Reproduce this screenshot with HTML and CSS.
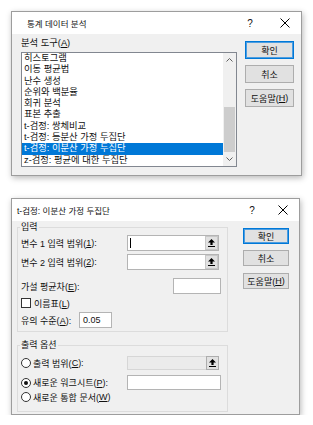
FILE: index.html
```html
<!DOCTYPE html>
<html lang="ko">
<head>
    <meta charset="UTF-8">
    <meta name="viewport" content="width=device-width, initial-scale=1.0">
    <title>통계 데이터 분석</title>
    <link rel="stylesheet" href="styles.css">
</head>
<body>
    <div class="page">
        <div class="dialog analysis">
            <div class="titlebar">
                <span class="title">통계 데이터 분석</span>
                <span class="help">?</span>
                <span class="close">
                    <svg width="10" height="10" viewBox="0 0 10 10"><path d="M0.5 0.5 L9.5 9.5 M9.5 0.5 L0.5 9.5" stroke="#000" stroke-width="1"/></svg>
                </span>
            </div>
            <div class="body">
                <div class="tools">
                    <div class="field-label">분석 도구(<u>A</u>)</div>
                    <div class="listbox">
                        <div class="items">
                            <div class="item">히스토그램</div>
                            <div class="item">이동 평균법</div>
                            <div class="item">난수 생성</div>
                            <div class="item">순위와 백분율</div>
                            <div class="item">회귀 분석</div>
                            <div class="item">표본 추출</div>
                            <div class="item">t-검정: 쌍체비교</div>
                            <div class="item">t-검정: 등분산 가정 두집단</div>
                            <div class="item selected">t-검정: 이분산 가정 두집단</div>
                            <div class="item">z-검정: 평균에 대한 두집단</div>
                        </div>
                        <div class="scrollbar">
                            <div class="arrow">
                                <svg width="7" height="4" viewBox="0 0 7 4"><path d="M0.5 3.5 L3.5 0.5 L6.5 3.5" fill="none" stroke="#606060"/></svg>
                            </div>
                            <div class="track"><div class="thumb"></div></div>
                            <div class="arrow">
                                <svg width="7" height="4" viewBox="0 0 7 4"><path d="M0.5 0.5 L3.5 3.5 L6.5 0.5" fill="none" stroke="#606060"/></svg>
                            </div>
                        </div>
                    </div>
                </div>
                <div class="buttons">
                    <div class="btn default">확인</div>
                    <div class="btn">취소</div>
                    <div class="btn">도움말(<u>H</u>)</div>
                </div>
            </div>
        </div>

        <div class="dialog ttest">
            <div class="titlebar">
                <span class="title">t-검정: 이분산 가정 두집단</span>
                <span class="help">?</span>
                <span class="close">
                    <svg width="10" height="10" viewBox="0 0 10 10"><path d="M0.5 0.5 L9.5 9.5 M9.5 0.5 L0.5 9.5" stroke="#000" stroke-width="1"/></svg>
                </span>
            </div>
            <div class="body">
                <div class="groups">
                    <fieldset class="group input-group">
                        <legend>입력</legend>
                        <div class="row range-row">
                            <span class="name">변수 1 입력 범위(<u>1</u>):</span>
                            <div class="refedit">
                                <span class="caret"></span>
                                <span class="refbtn">
                                    <svg width="7" height="8" viewBox="0 0 7 8"><path d="M3.5 0 L7 3.5 H4.6 V6 H2.4 V3.5 H0 Z" fill="#000"/><rect x="0" y="7" width="7" height="1" fill="#000"/></svg>
                                </span>
                            </div>
                        </div>
                        <div class="row range-row second">
                            <span class="name">변수 2 입력 범위(<u>2</u>):</span>
                            <div class="refedit">
                                <span class="refbtn">
                                    <svg width="7" height="8" viewBox="0 0 7 8"><path d="M3.5 0 L7 3.5 H4.6 V6 H2.4 V3.5 H0 Z" fill="#000"/><rect x="0" y="7" width="7" height="1" fill="#000"/></svg>
                                </span>
                            </div>
                        </div>
                        <div class="row mean-row">
                            <span>가설 평균차(<u>E</u>):</span>
                            <div class="textbox mean"></div>
                        </div>
                        <div class="row check-row">
                            <span class="checkbox"></span>
                            <span>이름표(<u>L</u>)</span>
                        </div>
                        <div class="row alpha-row">
                            <span class="alpha-name">유의 수준(<u>A</u>):</span>
                            <div class="textbox alpha">0.05</div>
                        </div>
                    </fieldset>

                    <fieldset class="group output-group">
                        <legend>출력 옵션</legend>
                        <div class="row out-range">
                            <span class="name"><span class="radio"></span>출력 범위(<u>C</u>):</span>
                            <div class="refedit disabled">
                                <span class="refbtn">
                                    <svg width="7" height="8" viewBox="0 0 7 8"><path d="M3.5 0 L7 3.5 H4.6 V6 H2.4 V3.5 H0 Z" fill="#000"/><rect x="0" y="7" width="7" height="1" fill="#000"/></svg>
                                </span>
                            </div>
                        </div>
                        <div class="row out-sheet">
                            <span class="name"><span class="radio checked"></span>새로운 워크시트(<u>P</u>):</span>
                            <div class="textbox sheet"></div>
                        </div>
                        <div class="row out-book">
                            <span class="name"><span class="radio"></span>새로운 통합 문서(<u>W</u>)</span>
                        </div>
                    </fieldset>
                </div>
                <div class="buttons">
                    <div class="btn default">확인</div>
                    <div class="btn">취소</div>
                    <div class="btn help-btn">도움말(<u>H</u>)</div>
                </div>
            </div>
        </div>
    </div>
</body>
</html>
```

FILE: styles.css
```css
* {
    box-sizing: border-box;
}
body {
    margin: 0;
    background-color: #fff;
    font-family: "Liberation Sans", "Noto Sans CJK KR", sans-serif;
    font-size: 9px;
    color: #111;
}
.page {
    padding: 11px 0 0 11px;
}
.dialog {
    display: flex;
    flex-direction: column;
    background-color: #f0f0f0;
    border: 1px solid #9d9d9d;
    box-shadow: 1px 2px 6px rgba(0, 0, 0, 0.28);
}
.analysis {
    width: 291px;
    height: 165px;
}
.ttest {
    width: 289px;
    height: 217px;
    margin-top: 22px;
}
.titlebar {
    flex: none;
    display: flex;
    align-items: center;
    height: 22px;
    background-color: #fff;
}
.title {
    flex: 1;
    font-size: 8.5px;
    white-space: nowrap;
}
.analysis .title {
    padding-left: 15px;
}
.ttest .title {
    padding-left: 5px;
}
.help {
    width: 30px;
    text-align: center;
    font-size: 10px;
}
.analysis .help {
    margin-right: 4px;
}
.close {
    width: 32px;
    display: flex;
    justify-content: center;
}
.body {
    flex: 1;
    display: flex;
}

/* first dialog */
.analysis .body {
    padding: 4px 7px 0 9px;
    gap: 8px;
}
.tools {
    width: 216px;
}
.field-label {
    height: 11px;
    line-height: 11px;
    margin-bottom: 3px;
    font-size: 9.3px;
}
.listbox {
    display: flex;
    height: 115px;
    background-color: #fff;
    border: 1px solid #828790;
}
.items {
    flex: 1;
}
.item {
    height: 11.3px;
    line-height: 11.3px;
    padding-left: 2px;
    font-size: 9.3px;
    white-space: nowrap;
}
.item.selected {
    background-color: #0078d7;
    color: #fff;
}
.scrollbar {
    width: 13px;
    display: flex;
    flex-direction: column;
    background-color: #f0f0f0;
}
.arrow {
    height: 14px;
    display: flex;
    align-items: center;
    justify-content: center;
}
.track {
    flex: 1;
    display: flex;
    flex-direction: column;
    justify-content: flex-end;
}
.thumb {
    height: 45px;
    margin: 0 1px;
    background-color: #cdcdcd;
}
.buttons {
    display: flex;
    flex-direction: column;
}
.analysis .buttons {
    width: 49px;
    padding-top: 3px;
    gap: 6px;
}
.btn {
    display: flex;
    align-items: center;
    justify-content: center;
    height: 18px;
    background-color: #e1e1e1;
    border: 1px solid #adadad;
}
.btn.default {
    border-color: #0078d7;
    box-shadow: inset 0 0 0 1px #4d9de0;
}

/* second dialog */
.ttest .body {
    padding: 1px 10px 0 5px;
    gap: 15px;
}
.groups {
    width: 211px;
}
.group {
    margin: 0;
    min-width: 0;
    border: 1px solid #dcdcdc;
    padding: 3px 6px 3px 3px;
}
.group legend {
    padding: 0 1px;
    margin-left: -1px;
    line-height: 10px;
}
.output-group {
    margin-top: 8px;
    padding-bottom: 8px;
}
.row {
    display: flex;
    align-items: center;
    height: 16px;
    white-space: nowrap;
}
.name {
    display: flex;
    align-items: center;
    width: 106px;
}
.range-row {
    margin-bottom: 3px;
}
.range-row.second {
    margin-bottom: 8px;
}
.mean-row {
    justify-content: space-between;
}
.check-row {
    height: 14px;
    margin-top: 2px;
}
.alpha-row {
    margin-top: 2px;
}
.alpha-name {
    width: 58px;
}
.refedit {
    display: flex;
    align-items: center;
    justify-content: flex-end;
    width: 92px;
    height: 16px;
    background-color: #fff;
    border: 1px solid #b4b4b4;
}
.refedit.disabled {
    background-color: #ebebeb;
    border-color: #d6d6d6;
    height: 14px;
}
.caret {
    width: 1px;
    height: 10px;
    margin: 0 auto 0 2px;
    background-color: #000;
}
.refbtn {
    display: flex;
    align-items: center;
    justify-content: center;
    width: 13px;
    height: 14px;
    background-color: #e1e1e1;
    border: 1px solid #c8c8c8;
}
.refedit.disabled .refbtn {
    height: 14px;
    margin-right: -1px;
    border-color: #adadad;
}
.textbox {
    height: 16px;
    background-color: #fff;
    border: 1px solid #b4b4b4;
}
.textbox.mean {
    width: 48px;
}
.textbox.alpha {
    width: 33px;
    line-height: 14px;
    padding-left: 3px;
}
.textbox.sheet {
    width: 94px;
    height: 15px;
}
.checkbox {
    width: 10px;
    height: 10px;
    margin-right: 3px;
    background-color: #fff;
    border: 1px solid #333;
}
.radio {
    display: flex;
    align-items: center;
    justify-content: center;
    width: 10px;
    height: 10px;
    margin-right: 2px;
    background-color: #fff;
    border: 1px solid #333;
    border-radius: 50%;
}
.radio.checked::after {
    content: "";
    width: 4px;
    height: 4px;
    border-radius: 50%;
    background-color: #111;
}
.out-range {
    height: 14px;
    margin-top: 3px;
}
.out-sheet {
    height: 15px;
    margin-top: 5px;
}
.out-book {
    height: 12px;
    margin-top: 1px;
}
.ttest .buttons {
    width: 46px;
    padding-top: 6px;
}
.ttest .btn {
    height: 16px;
    margin-bottom: 6px;
}
.ttest .btn.help-btn {
    margin-top: 1px;
}
```
